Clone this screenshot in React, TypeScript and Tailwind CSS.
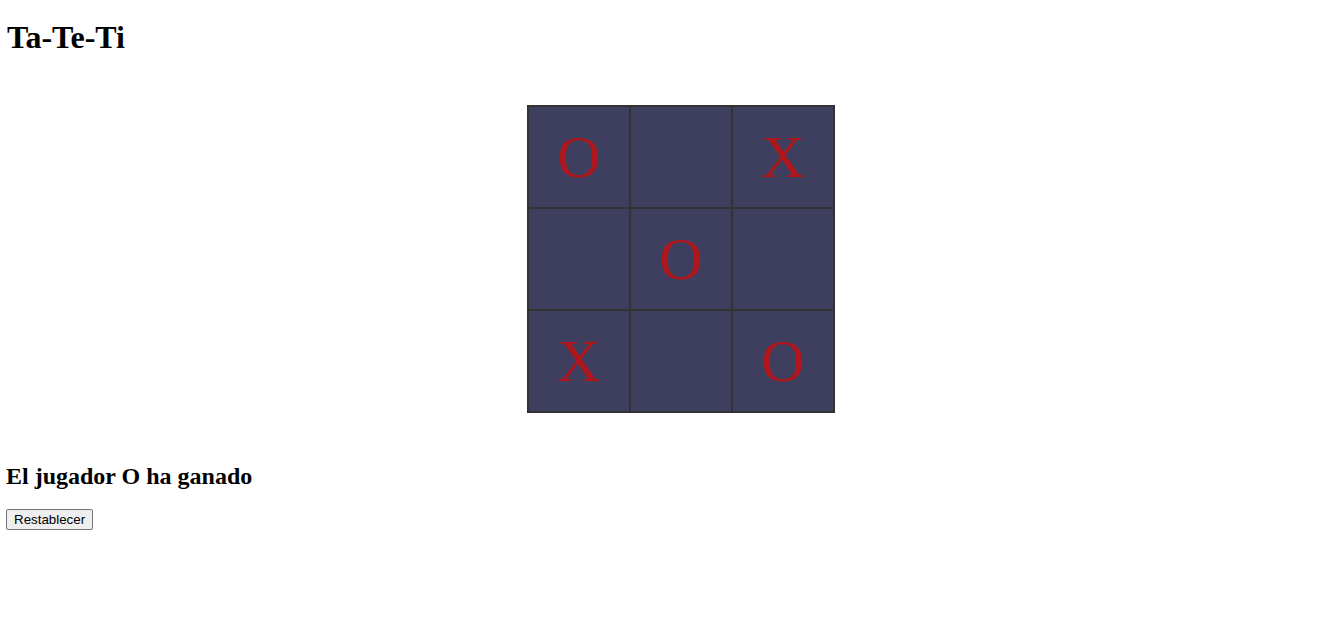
import React from "react";

const board = ["O", "", "X", "", "O", "", "X", "", "O"];

export default function App() {
  return (
    <div className="min-h-[640px] bg-white text-black">
      <div className="px-[6px] pt-[19px]">
        <h1 className="m-0 text-[32px] leading-[37px] font-bold font-['Liberation_Serif',serif] pl-[1px]">
          Ta-Te-Ti
        </h1>
        <div className="flex justify-center pl-[25px] mt-[49px]">
          <div className="grid grid-cols-3 border border-[#333333] w-[308px]">
            {board.map((v, i) => (
              <div
                key={i}
                className="w-[102px] h-[102px] border border-[#333333] bg-[#3e3e5f] flex items-center justify-center text-[60px] leading-none text-[#b0171c] font-['Liberation_Serif',serif]"
              >
                {v}
              </div>
            ))}
          </div>
        </div>
        <h2 className="mt-[49px] text-[24px] leading-[28px] font-bold font-['Liberation_Serif',serif]">
          El jugador O ha ganado
        </h2>
        <button className="mt-[19px] h-[21px] px-[7px] text-[13.33px] leading-none font-['Liberation_Sans',Arial,sans-serif] bg-[#efefef] border border-[#767676] rounded-[2px] text-black">
          Restablecer
        </button>
      </div>
    </div>
  );
}
